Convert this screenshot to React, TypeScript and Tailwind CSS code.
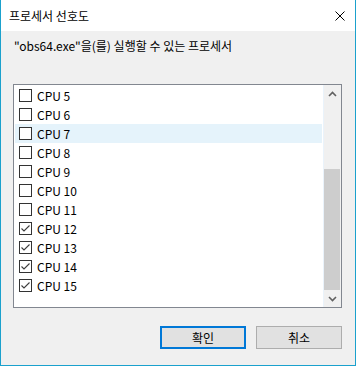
import React from "react";

const items = [5, 6, 7, 8, 9, 10, 11, 12, 13, 14, 15];

function Box({ checked }: { checked: boolean }) {
  return (
    <div className="w-[13px] h-[13px] border border-[#333333] bg-white flex items-center justify-center shrink-0">
      {checked && (
        <svg width="11" height="11" viewBox="0 0 11 11">
          <path d="M1.5 5.5 L4 8 L9.5 2.5" fill="none" stroke="#3c3c3c" strokeWidth="1.1" />
        </svg>
      )}
    </div>
  );
}

export default function App() {
  return (
    <div
      className="w-[356px] h-[366px] border-l border-r border-b border-[#1ba1cd] bg-[#f0f0f0] flex flex-col text-[12px] text-black"
      style={{ fontFamily: '"Noto Sans CJK KR", "Noto Sans", sans-serif' }}
    >
      <div className="h-[31px] bg-white flex items-center justify-between pl-[8px] pr-[10px] shrink-0">
        <span className="leading-[16px]">프로세서 선호도</span>
        <svg width="10" height="10" viewBox="0 0 10 10" className="mr-[0px]">
          <path d="M0.5 0.5 L9.5 9.5 M9.5 0.5 L0.5 9.5" stroke="#000" strokeWidth="1" />
        </svg>
      </div>
      <div className="pl-[13px] mt-[7px] leading-[16px]">"obs64.exe"을(를) 실행할 수 있는 프로세서</div>
      <div className="ml-[12px] mt-[30px] w-[329px] h-[224px] border border-[#828790] bg-white flex">
        <div className="flex-1 px-[1px] pt-[1px] border-r border-[#eaf3fb]">
          {items.map((n) => (
            <div
              key={n}
              className={`h-[19px] flex items-center pl-[4px] gap-[5px] ${n === 7 ? "bg-[#e5f3fb]" : ""}`}
            >
              <Box checked={n >= 12} />
              <span className="leading-[16px]">CPU {n}</span>
            </div>
          ))}
        </div>
        <div className="w-[17px] bg-[#f0f0f0] flex flex-col">
          <div className="h-[17px] flex items-center justify-center">
            <svg width="9" height="6" viewBox="0 0 9 6">
              <path d="M1 5 L4.5 1.5 L8 5" fill="none" stroke="#606060" strokeWidth="1.6" />
            </svg>
          </div>
          <div className="flex-1 flex flex-col justify-end">
            <div className="h-[121px] bg-[#cdcdcd] mr-[1px]" />
          </div>
          <div className="h-[17px] flex items-center justify-center">
            <svg width="9" height="6" viewBox="0 0 9 6">
              <path d="M1 1 L4.5 4.5 L8 1" fill="none" stroke="#606060" strokeWidth="1.6" />
            </svg>
          </div>
        </div>
      </div>
      <div className="flex justify-end gap-[10px] pr-[13px] mt-[18px]">
        <button className="w-[86px] h-[23px] border-2 border-[#0078d7] bg-[#e1e1e1] flex items-center justify-center leading-[16px]">
          확인
        </button>
        <button className="w-[86px] h-[23px] border border-[#adadad] bg-[#e1e1e1] flex items-center justify-center leading-[16px]">
          취소
        </button>
      </div>
    </div>
  );
}
